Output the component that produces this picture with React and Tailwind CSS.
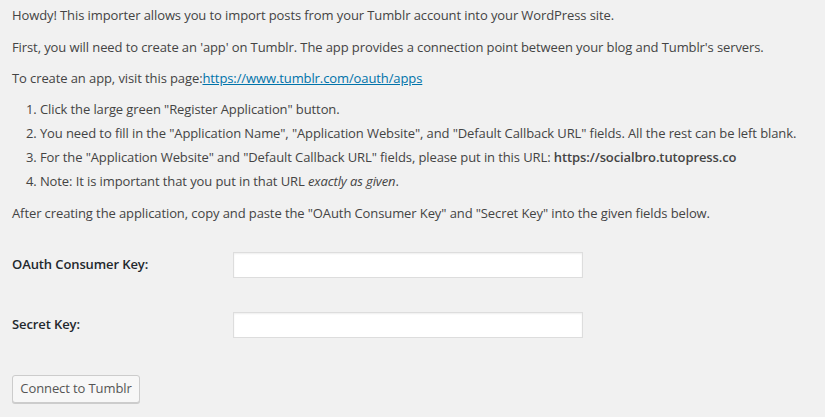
export default function App() {
  return (
    <div
      className="min-h-[417px] bg-[#f1f1f1] px-3 pt-[5px] text-[13px] tracking-[-0.1px] text-[#444]"
      style={{ fontFamily: '"Open Sans", "Noto Sans", Arial, sans-serif' }}
    >
      <p className="mb-3 leading-5">
        Howdy! This importer allows you to import posts from your Tumblr account into your WordPress site.
      </p>
      <p className="mb-[11px] leading-5">
        First, you will need to create an 'app' on Tumblr. The app provides a connection point between your blog and Tumblr's servers.
      </p>
      <p className="mb-[11px] leading-5">
        To create an app, visit this page:
        <a href="#" className="text-[#0073aa] underline">https://www.tumblr.com/oauth/apps</a>
      </p>
      <ol className="mb-3 ml-[14px] list-none leading-5">
        <li className="mb-1">1. Click the large green "Register Application" button.</li>
        <li className="mb-1">
          2. You need to fill in the "Application Name", "Application Website", and "Default Callback URL" fields. All the rest can be left blank.
        </li>
        <li className="mb-1">
          3. For the "Application Website" and "Default Callback URL" fields, please put in this URL:{" "}
          <strong className="font-semibold">https://socialbro.tutopress.co</strong>
        </li>
        <li>
          4. Note: It is important that you put in that URL <em>exactly as given</em>.
        </li>
      </ol>
      <p className="leading-5">
        After creating the application, copy and paste the "OAuth Consumer Key" and "Secret Key" into the given fields below.
      </p>

      <div className="mt-[29px] flex items-center">
        <label className="w-[221px] text-[13px] font-semibold text-[#23282d]">OAuth Consumer Key:</label>
        <input
          type="text"
          className="h-[26px] w-[350px] border border-[#ddd] bg-white shadow-[inset_0_1px_2px_rgba(0,0,0,0.07)] outline-none"
        />
      </div>
      <div className="mt-[34px] flex items-center">
        <label className="w-[221px] text-[13px] font-semibold text-[#23282d]">Secret Key:</label>
        <input
          type="text"
          className="h-[26px] w-[350px] border border-[#ddd] bg-white shadow-[inset_0_1px_2px_rgba(0,0,0,0.07)] outline-none"
        />
      </div>
      <button
        type="button"
        className="mt-[37px] h-[28px] w-[128px] rounded-[3px] border border-[#ccc] bg-[#f7f7f7] text-[13px] text-[#555] shadow-[0_1px_0_#ccc]"
      >
        Connect to Tumblr
      </button>
    </div>
  );
}
